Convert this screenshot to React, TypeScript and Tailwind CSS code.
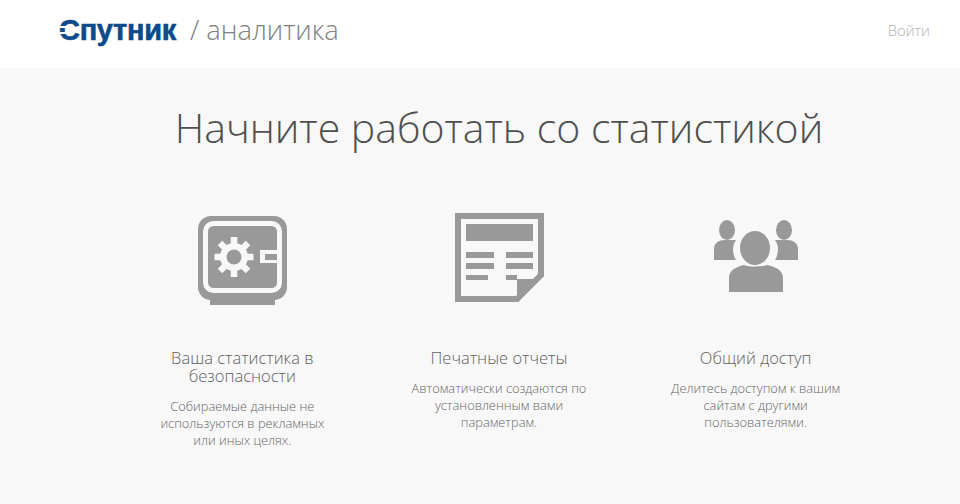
const font = { fontFamily: '"Open Sans", sans-serif' }

function SafeIcon() {
  return (
    <svg width="92" height="92" viewBox="0 0 92 92">
      <g transform="translate(2 3)">
        <path d="M12 80h65v9H12z" fill="#999" />
        <rect x="0" y="0" width="89" height="84" rx="13" fill="#999" />
        <rect x="7.500" y="7.500" width="74" height="67" rx="8" fill="none" stroke="#f8f8f8" strokeWidth="5" />
        <path d="M62 34h22v13H62z" fill="#f8f8f8" />
        <path d="M67 38h12v6H67z" fill="#999" />
        <g stroke="#f8f8f8" strokeWidth="6.500">
          <path d="M36 21v40M16.500 41h39M22 27l28 28M50 27L22 55" />
        </g>
        <circle cx="36" cy="41" r="14" fill="#f8f8f8" />
        <circle cx="36" cy="41" r="7.500" fill="#999" />
      </g>
    </svg>
  )
}

function ReportIcon() {
  return (
    <svg width="92" height="92" viewBox="0 0 92 92">
      <g transform="translate(2 0)">
        <path d="M3 3h83v59L62 86H3z" fill="none" stroke="#999" strokeWidth="6" />
        <path d="M62 66h22L62 89z" fill="#999" />
        <path d="M11 11h67v17H11zM11 39h28v6H11zM51 39h27v6H51zM11 50h28v6H11zM51 50h27v6H51zM11 62h22v5H11zM51 62h11v5H51z" fill="#999" />
      </g>
    </svg>
  )
}

function UsersIcon() {
  return (
    <svg width="92" height="92" viewBox="0 0 92 92">
      <g fill="#999" transform="translate(4 7)">
        <ellipse cx="13" cy="10" rx="8" ry="10" />
        <path d="M0 40V29c0-6 5-9 11-9h11c-2 3-3 6-3 9 0 4 1 8 3 11z" />
        <ellipse cx="70" cy="10" rx="8" ry="10" />
        <path d="M84 40V29c0-6-5-9-11-9H61c2 3 3 6 3 9 0 4-1 8-3 11z" />
        <ellipse cx="41" cy="28" rx="15" ry="17" />
        <path d="M15 72V58c0-8 7-11 15-13 4 2 19 2 23 0 9 2 16 5 16 13v14z" />
      </g>
    </svg>
  )
}

const cards = [
  { icon: <SafeIcon />, title: "Ваша статистика в безопасности", text: "Собираемые данные не используются в рекламных или иных целях." },
  { icon: <ReportIcon />, title: "Печатные отчеты", text: "Автоматически создаются по установленным вами параметрам." },
  { icon: <UsersIcon />, title: "Общий доступ", text: "Делитесь доступом к вашим сайтам с другими пользователями." },
]

export default function App() {
  return (
    <div className="h-[504px] w-[960px] overflow-hidden bg-[#f8f8f8]" style={font}>
      <header className="flex h-[68px] justify-between bg-white pl-[59px] pr-[30px] pt-[17px]">
        <div className="flex items-center self-start">
          <span className="relative text-[29px] font-bold leading-[26px] tracking-[-0.3px] text-[#0d4a8c] [-webkit-text-stroke:0.6px_#0d4a8c]" style={{ fontFamily: '"Liberation Sans", sans-serif' }}>
            Спутник
            <span className="absolute left-0 top-[9px] h-[2px] w-[9px] bg-white" />
            <span className="absolute left-0 top-[15px] h-[2px] w-[9px] bg-white" />
          </span>
          <span className="ml-[14px] text-[27.300px] font-light leading-[26px] text-[#808080]">/ аналитика</span>
        </div>
        <a className="mt-[2px] text-[14.800px] font-light leading-[22px] text-[#b0b0b0]">Войти</a>
      </header>
      <div className="pl-[38px]">
        <h1 className="mt-[29px] text-center text-[41px] font-light leading-[60px] text-[#4f4f4f]">Начните работать со статистикой</h1>
        <div className="mx-auto mt-[56px] grid w-[770px] grid-cols-3">
          {cards.map((c) => (
            <div key={c.title} className="flex flex-col items-center text-center">
              <div className="flex h-[92px] items-center justify-center">{c.icon}</div>
              <h2 className="mt-[44px] w-[180px] text-[16.500px] font-light leading-[18px] text-[#5f5f5f]">{c.title}</h2>
              <p className="mt-[13px] w-[180px] text-[12.800px] leading-[17px] font-light text-[#666]">{c.text}</p>
            </div>
          ))}
        </div>
      </div>
    </div>
  )
}
